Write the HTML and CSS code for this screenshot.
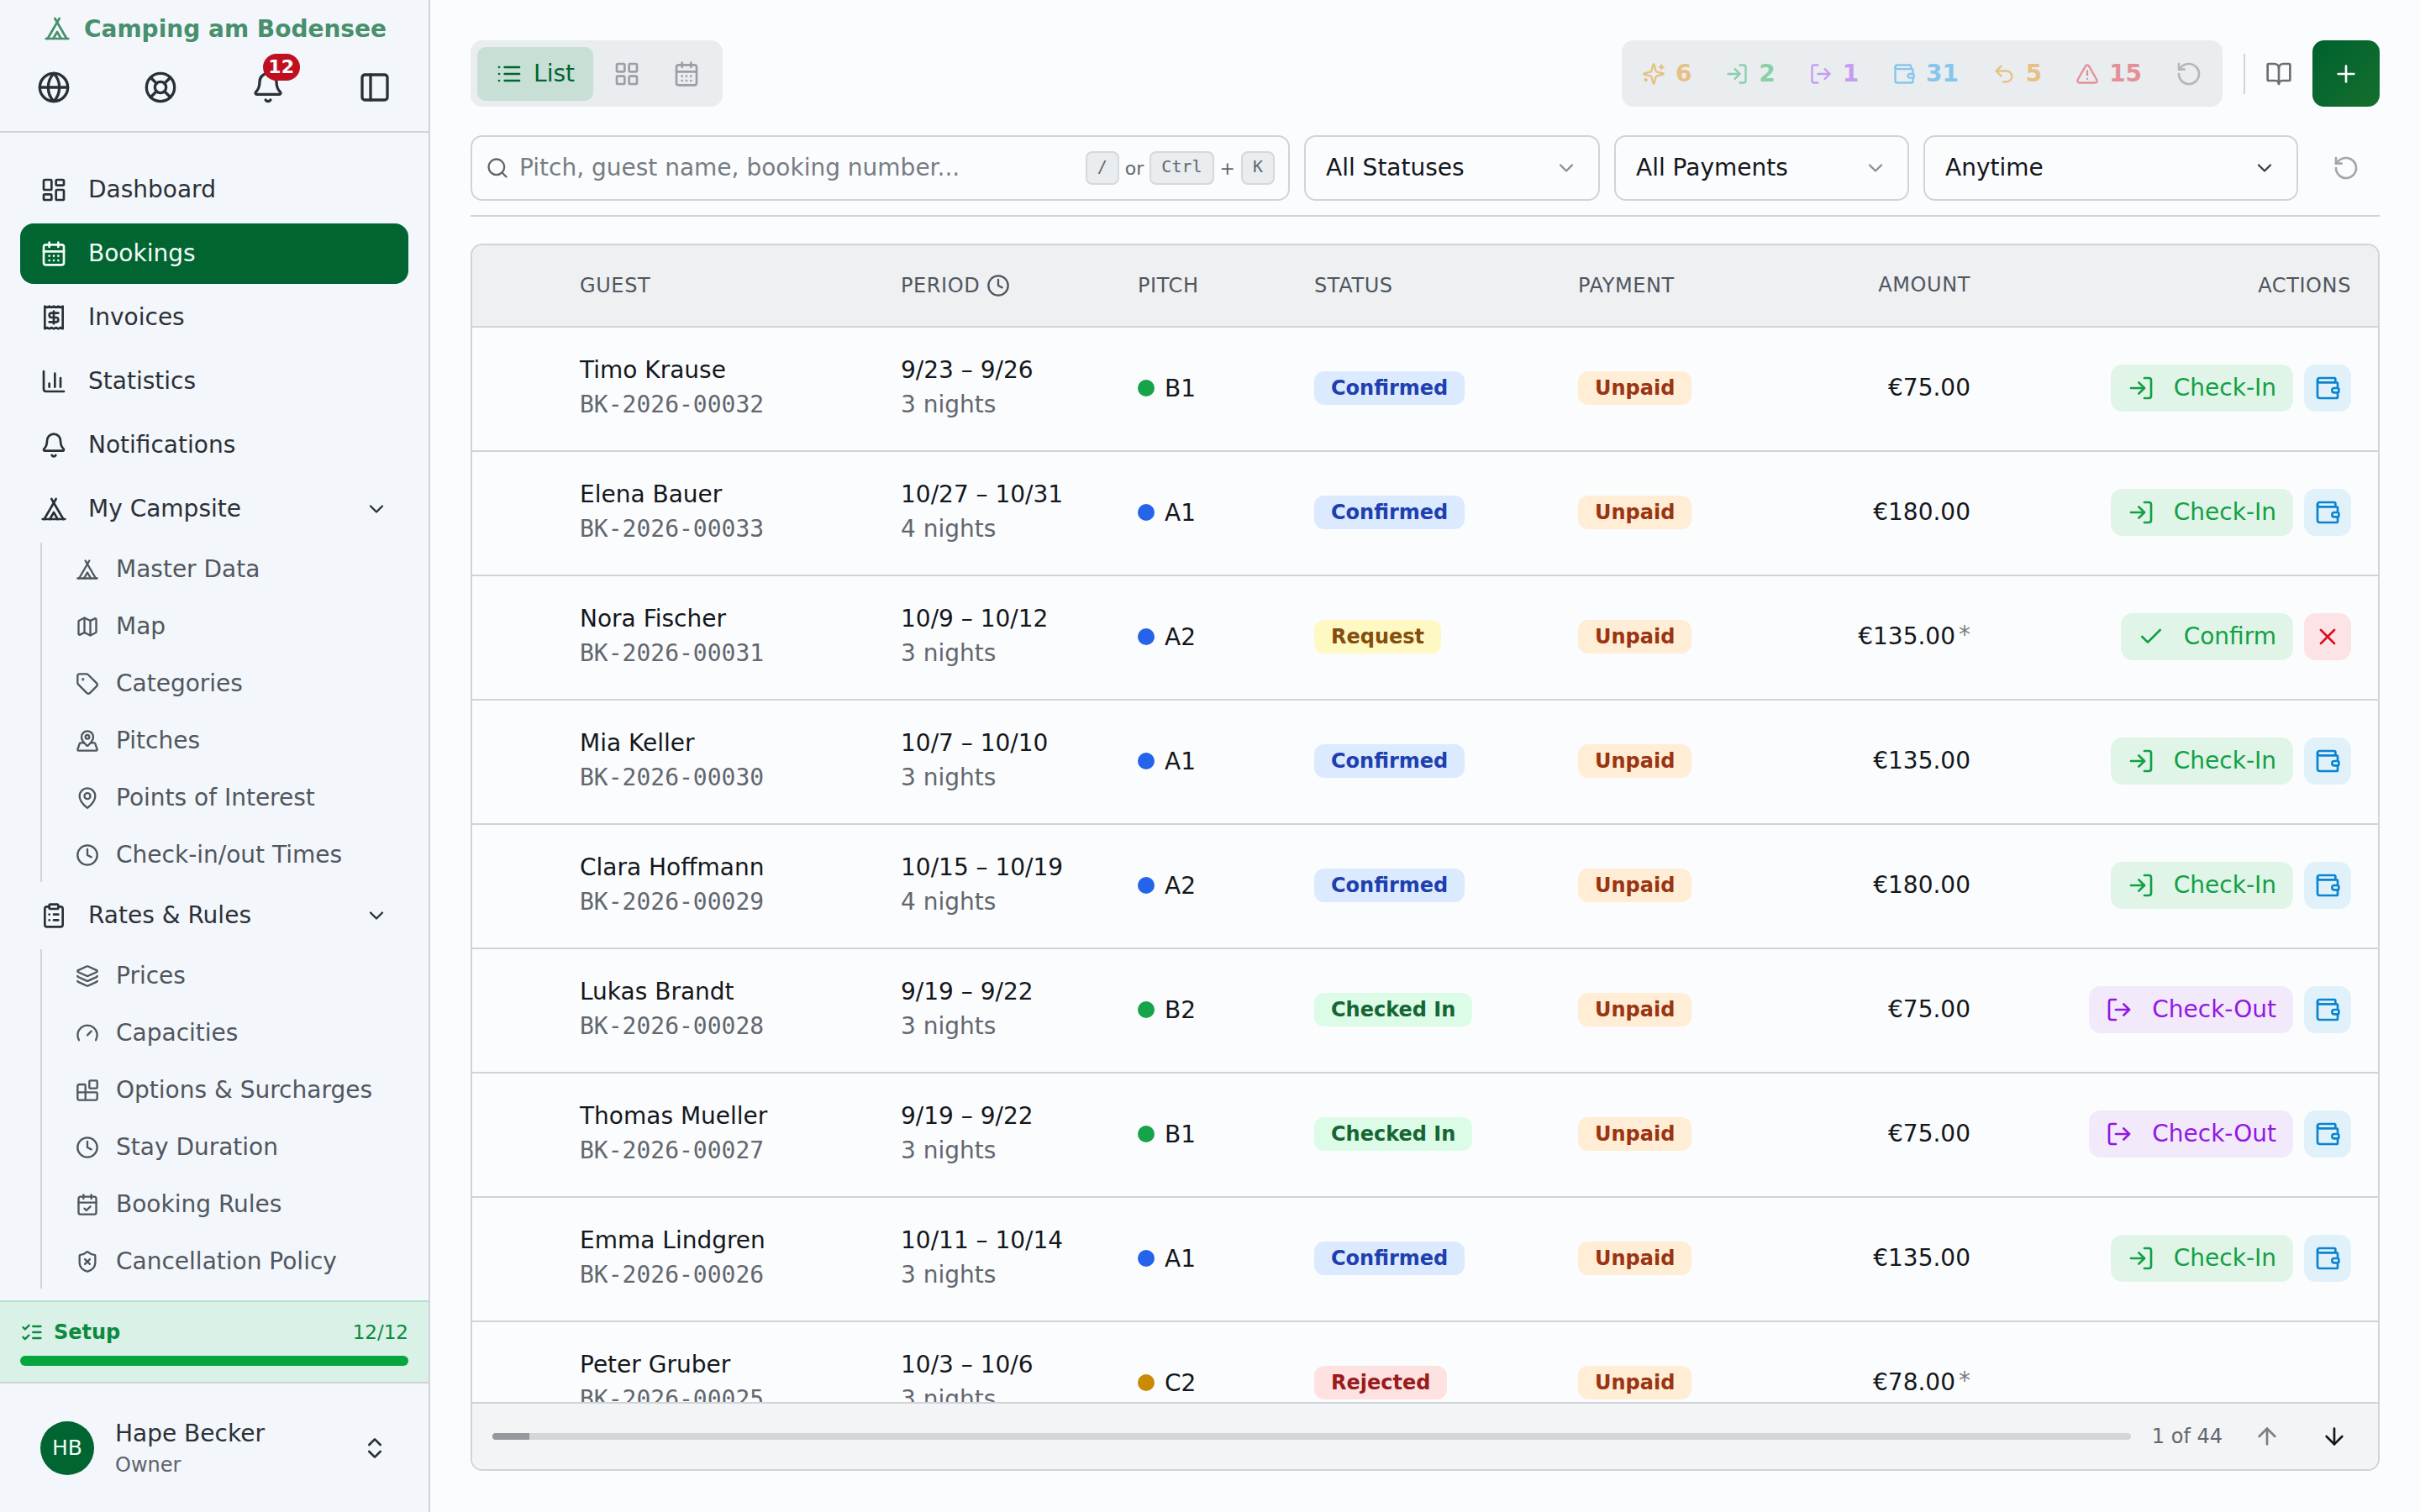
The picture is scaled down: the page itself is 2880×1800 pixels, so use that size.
FILE: index.html
```html
<!DOCTYPE html>
<html lang="en">
<head>
    <meta charset="UTF-8">
    <meta name="viewport" content="width=device-width, initial-scale=1.0">
    <title>Bookings - Camping am Bodensee</title>
    <link rel="stylesheet" href="styles.css">
</head>
<body>
    <svg class="sprite" xmlns="http://www.w3.org/2000/svg">
        <symbol id="i-tent" viewBox="0 0 24 24"><path d="M3.5 21 14 3"/><path d="M20.5 21 10 3"/><path d="M15.5 21 12 15l-3.5 6"/><path d="M2 21h20"/></symbol>
        <symbol id="i-globe" viewBox="0 0 24 24"><circle cx="12" cy="12" r="10"/><path d="M12 2a14.5 14.5 0 0 0 0 20 14.5 14.5 0 0 0 0-20"/><path d="M2 12h20"/></symbol>
        <symbol id="i-buoy" viewBox="0 0 24 24"><circle cx="12" cy="12" r="10"/><path d="m4.93 4.93 4.24 4.24"/><path d="m14.83 9.17 4.24-4.24"/><path d="m14.83 14.83 4.24 4.24"/><path d="m9.17 14.83-4.24 4.24"/><circle cx="12" cy="12" r="4"/></symbol>
        <symbol id="i-bell" viewBox="0 0 24 24"><path d="M10.268 21a2 2 0 0 0 3.464 0"/><path d="M3.262 15.326A1 1 0 0 0 4 17h16a1 1 0 0 0 .74-1.673C19.41 13.956 18 12.499 18 8A6 6 0 0 0 6 8c0 4.499-1.411 5.956-2.738 7.326"/></symbol>
        <symbol id="i-panel" viewBox="0 0 24 24"><rect x="3" y="3" width="18" height="18" rx="2"/><path d="M9 3v18"/></symbol>
        <symbol id="i-dash" viewBox="0 0 24 24"><rect x="3" y="3" width="7" height="9" rx="1"/><rect x="14" y="3" width="7" height="5" rx="1"/><rect x="14" y="12" width="7" height="9" rx="1"/><rect x="3" y="16" width="7" height="5" rx="1"/></symbol>
        <symbol id="i-cal" viewBox="0 0 24 24"><path d="M8 2v4"/><path d="M16 2v4"/><rect x="3" y="4" width="18" height="18" rx="2"/><path d="M3 10h18"/><path d="M8 14h.01"/><path d="M12 14h.01"/><path d="M16 14h.01"/><path d="M8 18h.01"/><path d="M12 18h.01"/><path d="M16 18h.01"/></symbol>
        <symbol id="i-receipt" viewBox="0 0 24 24"><path d="M4 2v20l2-1 2 1 2-1 2 1 2-1 2 1 2-1 2 1V2l-2 1-2-1-2 1-2-1-2 1-2-1-2 1Z"/><path d="M16 8h-6a2 2 0 1 0 0 4h4a2 2 0 1 1 0 4H8"/><path d="M12 17.5v-11"/></symbol>
        <symbol id="i-chart" viewBox="0 0 24 24"><path d="M3 3v16a2 2 0 0 0 2 2h16"/><path d="M8 17v-3"/><path d="M13 17V5"/><path d="M18 17V9"/></symbol>
        <symbol id="i-down" viewBox="0 0 24 24"><path d="m6 9 6 6 6-6"/></symbol>
        <symbol id="i-map" viewBox="0 0 24 24"><path d="M14.106 5.553a2 2 0 0 0 1.788 0l3.659-1.83A1 1 0 0 1 21 4.619v12.764a1 1 0 0 1-.553.894l-4.553 2.277a2 2 0 0 1-1.788 0l-4.212-2.106a2 2 0 0 0-1.788 0l-3.659 1.83A1 1 0 0 1 3 19.381V6.618a1 1 0 0 1 .553-.894l4.553-2.277a2 2 0 0 1 1.788 0z"/><path d="M15 5.764v15"/><path d="M9 3.236v15"/></symbol>
        <symbol id="i-tag" viewBox="0 0 24 24"><path d="M12.586 2.586A2 2 0 0 0 11.172 2H4a2 2 0 0 0-2 2v7.172a2 2 0 0 0 .586 1.414l8.704 8.704a2.426 2.426 0 0 0 3.42 0l6.58-6.58a2.426 2.426 0 0 0 0-3.42z"/><circle cx="7.5" cy="7.5" r=".5"/></symbol>
        <symbol id="i-pinned" viewBox="0 0 24 24"><path d="M18 8c0 3.613-3.869 7.429-5.393 8.795a1 1 0 0 1-1.214 0C9.87 15.429 6 11.613 6 8a6 6 0 0 1 12 0"/><circle cx="12" cy="8" r="2"/><path d="M8.714 14h-3.71a1 1 0 0 0-.948.683l-2.004 6A1 1 0 0 0 3 22h18a1 1 0 0 0 .948-1.316l-2-6a1 1 0 0 0-.949-.684h-3.712"/></symbol>
        <symbol id="i-pin" viewBox="0 0 24 24"><path d="M20 10c0 4.993-5.539 10.193-7.399 11.799a1 1 0 0 1-1.202 0C9.539 20.193 4 14.993 4 10a8 8 0 0 1 16 0"/><circle cx="12" cy="10" r="3"/></symbol>
        <symbol id="i-clock" viewBox="0 0 24 24"><circle cx="12" cy="12" r="10"/><path d="M12 6v6l4 2"/></symbol>
        <symbol id="i-clip" viewBox="0 0 24 24"><rect x="8" y="2" width="8" height="4" rx="1"/><path d="M16 4h2a2 2 0 0 1 2 2v14a2 2 0 0 1-2 2H6a2 2 0 0 1-2-2V6a2 2 0 0 1 2-2h2"/><path d="M12 11h4"/><path d="M12 16h4"/><path d="M8 11h.01"/><path d="M8 16h.01"/></symbol>
        <symbol id="i-layers" viewBox="0 0 24 24"><path d="M12.83 2.18a2 2 0 0 0-1.66 0L2.6 6.08a1 1 0 0 0 0 1.83l8.58 3.91a2 2 0 0 0 1.66 0l8.58-3.9a1 1 0 0 0 0-1.83z"/><path d="M2 12a1 1 0 0 0 .58.91l8.6 3.91a2 2 0 0 0 1.65 0l8.58-3.9A1 1 0 0 0 22 12"/><path d="M2 17a1 1 0 0 0 .58.91l8.6 3.91a2 2 0 0 0 1.65 0l8.58-3.9A1 1 0 0 0 22 17"/></symbol>
        <symbol id="i-gauge" viewBox="0 0 24 24"><path d="m12 14 4-4"/><path d="M3.34 19a10 10 0 1 1 17.32 0"/></symbol>
        <symbol id="i-blocks" viewBox="0 0 24 24"><path d="M10 22V7a1 1 0 0 0-1-1H4a2 2 0 0 0-2 2v12a2 2 0 0 0 2 2h16a2 2 0 0 0 2-2v-5a1 1 0 0 0-1-1H2"/><rect x="14" y="2" width="8" height="8" rx="1"/></symbol>
        <symbol id="i-calcheck" viewBox="0 0 24 24"><path d="M8 2v4"/><path d="M16 2v4"/><rect x="3" y="4" width="18" height="18" rx="2"/><path d="M3 10h18"/><path d="m9 16 2 2 4-4"/></symbol>
        <symbol id="i-shield" viewBox="0 0 24 24"><path d="M20 13c0 5-3.5 7.5-7.66 8.95a1 1 0 0 1-.67-.01C7.5 20.5 4 18 4 13V6a1 1 0 0 1 1-1c2 0 4.5-1.2 6.24-2.72a1.17 1.17 0 0 1 1.52 0C14.51 3.81 17 5 19 5a1 1 0 0 1 1 1z"/><path d="m14.5 9.5-5 5"/><path d="m9.5 9.5 5 5"/></symbol>
        <symbol id="i-checks" viewBox="0 0 24 24"><path d="m3 17 2 2 4-4"/><path d="m3 7 2 2 4-4"/><path d="M13 6h8"/><path d="M13 12h8"/><path d="M13 18h8"/></symbol>
        <symbol id="i-updown" viewBox="0 0 24 24"><path d="m7 15 5 5 5-5"/><path d="m7 9 5-5 5 5"/></symbol>
        <symbol id="i-list" viewBox="0 0 24 24"><path d="M3 12h.01"/><path d="M3 18h.01"/><path d="M3 6h.01"/><path d="M8 12h13"/><path d="M8 18h13"/><path d="M8 6h13"/></symbol>
        <symbol id="i-grid" viewBox="0 0 24 24"><rect x="3" y="3" width="7" height="7" rx="1"/><rect x="14" y="3" width="7" height="7" rx="1"/><rect x="14" y="14" width="7" height="7" rx="1"/><rect x="3" y="14" width="7" height="7" rx="1"/></symbol>
        <symbol id="i-search" viewBox="0 0 24 24"><circle cx="11" cy="11" r="8"/><path d="m21 21-4.3-4.3"/></symbol>
        <symbol id="i-spark" viewBox="0 0 24 24"><path d="M9.937 15.5A2 2 0 0 0 8.5 14.063l-6.135-1.582a.5.5 0 0 1 0-.962L8.5 9.936A2 2 0 0 0 9.937 8.5l1.582-6.135a.5.5 0 0 1 .963 0L14.063 8.5A2 2 0 0 0 15.5 9.937l6.135 1.581a.5.5 0 0 1 0 .964L15.5 14.063a2 2 0 0 0-1.437 1.437l-1.582 6.135a.5.5 0 0 1-.963 0z"/><path d="M20 3v4"/><path d="M22 5h-4"/><path d="M4 17v2"/><path d="M5 18H3"/></symbol>
        <symbol id="i-login" viewBox="0 0 24 24"><path d="M15 3h4a2 2 0 0 1 2 2v14a2 2 0 0 1-2 2h-4"/><path d="m10 17 5-5-5-5"/><path d="M15 12H3"/></symbol>
        <symbol id="i-logout" viewBox="0 0 24 24"><path d="M9 21H5a2 2 0 0 1-2-2V5a2 2 0 0 1 2-2h4"/><path d="m16 17 5-5-5-5"/><path d="M21 12H9"/></symbol>
        <symbol id="i-wallet" viewBox="0 0 24 24"><path d="M19 7V4a1 1 0 0 0-1-1H5a2 2 0 0 0 0 4h15a1 1 0 0 1 1 1v4h-3a2 2 0 0 0 0 4h3a1 1 0 0 0 1-1v-2a1 1 0 0 0-1-1"/><path d="M3 5v14a2 2 0 0 0 2 2h15a1 1 0 0 0 1-1v-4"/></symbol>
        <symbol id="i-undo" viewBox="0 0 24 24"><path d="M9 14 4 9l5-5"/><path d="M4 9h10.5a5.5 5.5 0 0 1 5.5 5.5a5.5 5.5 0 0 1-5.5 5.5H11"/></symbol>
        <symbol id="i-alert" viewBox="0 0 24 24"><path d="m21.73 18-8-14a2 2 0 0 0-3.48 0l-8 14A2 2 0 0 0 4 21h16a2 2 0 0 0 1.73-3"/><path d="M12 9v4"/><path d="M12 17h.01"/></symbol>
        <symbol id="i-reset" viewBox="0 0 24 24"><path d="M3 12a9 9 0 1 0 9-9 9.75 9.75 0 0 0-6.74 2.74L3 8"/><path d="M3 3v5h5"/></symbol>
        <symbol id="i-book" viewBox="0 0 24 24"><path d="M12 7v14"/><path d="M3 18a1 1 0 0 1-1-1V4a1 1 0 0 1 1-1h5a4 4 0 0 1 4 4 4 4 0 0 1 4-4h5a1 1 0 0 1 1 1v13a1 1 0 0 1-1 1h-6a3 3 0 0 0-3 3 3 3 0 0 0-3-3z"/></symbol>
        <symbol id="i-plus" viewBox="0 0 24 24"><path d="M5 12h14"/><path d="M12 5v14"/></symbol>
        <symbol id="i-check" viewBox="0 0 24 24"><path d="M20 6 9 17l-5-5"/></symbol>
        <symbol id="i-x" viewBox="0 0 24 24"><path d="M18 6 6 18"/><path d="m6 6 12 12"/></symbol>
        <symbol id="i-arrowup" viewBox="0 0 24 24"><path d="m5 12 7-7 7 7"/><path d="M12 19V5"/></symbol>
        <symbol id="i-arrowdown" viewBox="0 0 24 24"><path d="M12 5v14"/><path d="m19 12-7 7-7-7"/></symbol>
    </svg>

    <div class="app">
        <aside class="sidebar">
            <div class="side-head">
                <div class="brand">
                    <svg class="ic ic-32"><use href="#i-tent"/></svg>
                    <span>Camping am Bodensee</span>
                </div>
                <div class="side-tools">
                    <svg class="ic ic-40"><use href="#i-globe"/></svg>
                    <svg class="ic ic-40"><use href="#i-buoy"/></svg>
                    <div class="bell">
                        <svg class="ic ic-40"><use href="#i-bell"/></svg>
                        <span class="bell-count">12</span>
                    </div>
                    <svg class="ic ic-40"><use href="#i-panel"/></svg>
                </div>
            </div>

            <nav class="nav">
                <a class="nav-item"><svg class="ic ic-32"><use href="#i-dash"/></svg>Dashboard</a>
                <a class="nav-item active"><svg class="ic ic-32"><use href="#i-cal"/></svg>Bookings</a>
                <a class="nav-item"><svg class="ic ic-32"><use href="#i-receipt"/></svg>Invoices</a>
                <a class="nav-item"><svg class="ic ic-32"><use href="#i-chart"/></svg>Statistics</a>
                <a class="nav-item"><svg class="ic ic-32"><use href="#i-bell"/></svg>Notifications</a>
                <a class="nav-item"><svg class="ic ic-32"><use href="#i-tent"/></svg>My Campsite<svg class="ic ic-28 nav-caret"><use href="#i-down"/></svg></a>
                <div class="subnav">
                    <a class="sub-item"><svg class="ic ic-28"><use href="#i-tent"/></svg>Master Data</a>
                    <a class="sub-item"><svg class="ic ic-28"><use href="#i-map"/></svg>Map</a>
                    <a class="sub-item"><svg class="ic ic-28"><use href="#i-tag"/></svg>Categories</a>
                    <a class="sub-item"><svg class="ic ic-28"><use href="#i-pinned"/></svg>Pitches</a>
                    <a class="sub-item"><svg class="ic ic-28"><use href="#i-pin"/></svg>Points of Interest</a>
                    <a class="sub-item"><svg class="ic ic-28"><use href="#i-clock"/></svg>Check-in/out Times</a>
                </div>
                <a class="nav-item"><svg class="ic ic-32"><use href="#i-clip"/></svg>Rates &amp; Rules<svg class="ic ic-28 nav-caret"><use href="#i-down"/></svg></a>
                <div class="subnav">
                    <a class="sub-item"><svg class="ic ic-28"><use href="#i-layers"/></svg>Prices</a>
                    <a class="sub-item"><svg class="ic ic-28"><use href="#i-gauge"/></svg>Capacities</a>
                    <a class="sub-item"><svg class="ic ic-28"><use href="#i-blocks"/></svg>Options &amp; Surcharges</a>
                    <a class="sub-item"><svg class="ic ic-28"><use href="#i-clock"/></svg>Stay Duration</a>
                    <a class="sub-item"><svg class="ic ic-28"><use href="#i-calcheck"/></svg>Booking Rules</a>
                    <a class="sub-item"><svg class="ic ic-28"><use href="#i-shield"/></svg>Cancellation Policy</a>
                </div>
            </nav>

            <div class="setup">
                <div class="setup-top">
                    <svg class="ic ic-28"><use href="#i-checks"/></svg>
                    <strong>Setup</strong>
                    <span class="setup-count">12/12</span>
                </div>
                <div class="setup-bar"></div>
            </div>

            <div class="user">
                <div class="avatar">HB</div>
                <div class="user-info">
                    <div class="user-name">Hape Becker</div>
                    <div class="user-role">Owner</div>
                </div>
                <svg class="ic ic-32 user-caret"><use href="#i-updown"/></svg>
            </div>
        </aside>

        <main class="main">
            <div class="toolbar">
                <div class="view-switch">
                    <button class="view-btn active"><svg class="ic ic-32"><use href="#i-list"/></svg>List</button>
                    <button class="view-btn"><svg class="ic ic-32"><use href="#i-grid"/></svg></button>
                    <button class="view-btn"><svg class="ic ic-32"><use href="#i-cal"/></svg></button>
                </div>
                <div class="stats">
                    <span class="stat orange"><svg class="ic ic-28"><use href="#i-spark"/></svg>6</span>
                    <span class="stat green"><svg class="ic ic-28"><use href="#i-login"/></svg>2</span>
                    <span class="stat purple"><svg class="ic ic-28"><use href="#i-logout"/></svg>1</span>
                    <span class="stat blue"><svg class="ic ic-28"><use href="#i-wallet"/></svg>31</span>
                    <span class="stat orange"><svg class="ic ic-28"><use href="#i-undo"/></svg>5</span>
                    <span class="stat red"><svg class="ic ic-28"><use href="#i-alert"/></svg>15</span>
                    <svg class="ic ic-32 stat-reset"><use href="#i-reset"/></svg>
                </div>
                <div class="tool-divider"></div>
                <svg class="ic ic-32 tool-book"><use href="#i-book"/></svg>
                <button class="add-btn"><svg class="ic ic-32"><use href="#i-plus"/></svg></button>
            </div>

            <div class="filters">
                <div class="search">
                    <svg class="ic ic-28"><use href="#i-search"/></svg>
                    <span class="search-text">Pitch, guest name, booking number...</span>
                    <kbd>/</kbd><span class="key-sep">or</span><kbd>Ctrl</kbd><span class="key-sep">+</span><kbd>K</kbd>
                </div>
                <div class="select sel-status">All Statuses<svg class="ic ic-28"><use href="#i-down"/></svg></div>
                <div class="select sel-pay">All Payments<svg class="ic ic-28"><use href="#i-down"/></svg></div>
                <div class="select sel-time">Anytime<svg class="ic ic-28"><use href="#i-down"/></svg></div>
                <div class="filter-reset"><svg class="ic ic-32"><use href="#i-reset"/></svg></div>
            </div>

            <section class="table">
                <div class="row head">
                    <div class="guest">GUEST</div>
                    <div class="period-head">PERIOD <svg class="ic ic-28"><use href="#i-clock"/></svg></div>
                    <div>PITCH</div>
                    <div>STATUS</div>
                    <div>PAYMENT</div>
                    <div class="amount">AMOUNT</div>
                    <div class="actions">ACTIONS</div>
                </div>
                <div class="rows">
                    <div class="row">
                        <div class="guest stack"><div class="line">Timo Krause</div><div class="sub mono">BK-2026-00032</div></div>
                        <div class="stack"><div class="line">9/23 – 9/26</div><div class="sub">3 nights</div></div>
                        <div class="pitch"><i class="dot d-green"></i>B1</div>
                        <div><span class="badge b-confirmed">Confirmed</span></div>
                        <div><span class="badge b-unpaid">Unpaid</span></div>
                        <div class="amount">€75.00</div>
                        <div class="actions"><button class="act a-in"><svg class="ic ic-32"><use href="#i-login"/></svg>Check-In</button><button class="act-sq a-pay"><svg class="ic ic-32"><use href="#i-wallet"/></svg></button></div>
                    </div>
                    <div class="row">
                        <div class="guest stack"><div class="line">Elena Bauer</div><div class="sub mono">BK-2026-00033</div></div>
                        <div class="stack"><div class="line">10/27 – 10/31</div><div class="sub">4 nights</div></div>
                        <div class="pitch"><i class="dot d-blue"></i>A1</div>
                        <div><span class="badge b-confirmed">Confirmed</span></div>
                        <div><span class="badge b-unpaid">Unpaid</span></div>
                        <div class="amount">€180.00</div>
                        <div class="actions"><button class="act a-in"><svg class="ic ic-32"><use href="#i-login"/></svg>Check-In</button><button class="act-sq a-pay"><svg class="ic ic-32"><use href="#i-wallet"/></svg></button></div>
                    </div>
                    <div class="row">
                        <div class="guest stack"><div class="line">Nora Fischer</div><div class="sub mono">BK-2026-00031</div></div>
                        <div class="stack"><div class="line">10/9 – 10/12</div><div class="sub">3 nights</div></div>
                        <div class="pitch"><i class="dot d-blue"></i>A2</div>
                        <div><span class="badge b-request">Request</span></div>
                        <div><span class="badge b-unpaid">Unpaid</span></div>
                        <div class="amount">€135.00<span class="star">*</span></div>
                        <div class="actions"><button class="act a-in"><svg class="ic ic-32"><use href="#i-check"/></svg>Confirm</button><button class="act-sq a-no"><svg class="ic ic-32"><use href="#i-x"/></svg></button></div>
                    </div>
                    <div class="row">
                        <div class="guest stack"><div class="line">Mia Keller</div><div class="sub mono">BK-2026-00030</div></div>
                        <div class="stack"><div class="line">10/7 – 10/10</div><div class="sub">3 nights</div></div>
                        <div class="pitch"><i class="dot d-blue"></i>A1</div>
                        <div><span class="badge b-confirmed">Confirmed</span></div>
                        <div><span class="badge b-unpaid">Unpaid</span></div>
                        <div class="amount">€135.00</div>
                        <div class="actions"><button class="act a-in"><svg class="ic ic-32"><use href="#i-login"/></svg>Check-In</button><button class="act-sq a-pay"><svg class="ic ic-32"><use href="#i-wallet"/></svg></button></div>
                    </div>
                    <div class="row">
                        <div class="guest stack"><div class="line">Clara Hoffmann</div><div class="sub mono">BK-2026-00029</div></div>
                        <div class="stack"><div class="line">10/15 – 10/19</div><div class="sub">4 nights</div></div>
                        <div class="pitch"><i class="dot d-blue"></i>A2</div>
                        <div><span class="badge b-confirmed">Confirmed</span></div>
                        <div><span class="badge b-unpaid">Unpaid</span></div>
                        <div class="amount">€180.00</div>
                        <div class="actions"><button class="act a-in"><svg class="ic ic-32"><use href="#i-login"/></svg>Check-In</button><button class="act-sq a-pay"><svg class="ic ic-32"><use href="#i-wallet"/></svg></button></div>
                    </div>
                    <div class="row">
                        <div class="guest stack"><div class="line">Lukas Brandt</div><div class="sub mono">BK-2026-00028</div></div>
                        <div class="stack"><div class="line">9/19 – 9/22</div><div class="sub">3 nights</div></div>
                        <div class="pitch"><i class="dot d-green"></i>B2</div>
                        <div><span class="badge b-checked">Checked In</span></div>
                        <div><span class="badge b-unpaid">Unpaid</span></div>
                        <div class="amount">€75.00</div>
                        <div class="actions"><button class="act a-out"><svg class="ic ic-32"><use href="#i-logout"/></svg>Check-Out</button><button class="act-sq a-pay"><svg class="ic ic-32"><use href="#i-wallet"/></svg></button></div>
                    </div>
                    <div class="row">
                        <div class="guest stack"><div class="line">Thomas Mueller</div><div class="sub mono">BK-2026-00027</div></div>
                        <div class="stack"><div class="line">9/19 – 9/22</div><div class="sub">3 nights</div></div>
                        <div class="pitch"><i class="dot d-green"></i>B1</div>
                        <div><span class="badge b-checked">Checked In</span></div>
                        <div><span class="badge b-unpaid">Unpaid</span></div>
                        <div class="amount">€75.00</div>
                        <div class="actions"><button class="act a-out"><svg class="ic ic-32"><use href="#i-logout"/></svg>Check-Out</button><button class="act-sq a-pay"><svg class="ic ic-32"><use href="#i-wallet"/></svg></button></div>
                    </div>
                    <div class="row">
                        <div class="guest stack"><div class="line">Emma Lindgren</div><div class="sub mono">BK-2026-00026</div></div>
                        <div class="stack"><div class="line">10/11 – 10/14</div><div class="sub">3 nights</div></div>
                        <div class="pitch"><i class="dot d-blue"></i>A1</div>
                        <div><span class="badge b-confirmed">Confirmed</span></div>
                        <div><span class="badge b-unpaid">Unpaid</span></div>
                        <div class="amount">€135.00</div>
                        <div class="actions"><button class="act a-in"><svg class="ic ic-32"><use href="#i-login"/></svg>Check-In</button><button class="act-sq a-pay"><svg class="ic ic-32"><use href="#i-wallet"/></svg></button></div>
                    </div>
                    <div class="row">
                        <div class="guest stack"><div class="line">Peter Gruber</div><div class="sub mono">BK-2026-00025</div></div>
                        <div class="stack"><div class="line">10/3 – 10/6</div><div class="sub">3 nights</div></div>
                        <div class="pitch"><i class="dot d-amber"></i>C2</div>
                        <div><span class="badge b-rejected">Rejected</span></div>
                        <div><span class="badge b-unpaid">Unpaid</span></div>
                        <div class="amount">€78.00<span class="star">*</span></div>
                        <div class="actions"></div>
                    </div>
                </div>
                <div class="table-foot">
                    <div class="scroll-track"><div class="scroll-thumb"></div></div>
                    <span class="page-count">1 of 44</span>
                    <svg class="ic ic-32 page-up"><use href="#i-arrowup"/></svg>
                    <svg class="ic ic-32 page-down"><use href="#i-arrowdown"/></svg>
                </div>
            </section>
        </main>
    </div>
</body>
</html>
```

FILE: styles.css
```css
* {
    box-sizing: border-box;
}

html, body {
    margin: 0;
    height: 100%;
}

body {
    font-family: "DejaVu Sans", sans-serif;
    font-size: 28px;
    color: #14171b;
    background-color: #fbfcfe;
    overflow: hidden;
}

button {
    font: inherit;
    border: 0;
    padding: 0;
    background: none;
    color: inherit;
}

.sprite {
    display: none;
}

.ic {
    flex: none;
    display: block;
    fill: none;
    stroke: currentColor;
    stroke-width: 2;
    stroke-linecap: round;
    stroke-linejoin: round;
}

.ic-28 { width: 28px; height: 28px; }
.ic-32 { width: 32px; height: 32px; }
.ic-40 { width: 40px; height: 40px; }

.app {
    display: flex;
    height: 1800px;
}

/* sidebar */
.sidebar {
    width: 512px;
    flex: none;
    display: flex;
    flex-direction: column;
    background-color: #f3f6fa;
    border-right: 2px solid #d0d4d9;
    color: #2b3038;
}

.side-head {
    height: 158px;
    flex: none;
    border-bottom: 2px solid #d0d4d9;
}

.brand {
    height: 66px;
    padding: 2px 0 0 52px;
    display: flex;
    align-items: center;
    gap: 16px;
    color: #478f6d;
    font-size: 28px;
    font-weight: 700;
}

.side-tools {
    display: flex;
    justify-content: space-between;
    align-items: center;
    padding: 0 44px;
    height: 76px;
}

.bell {
    position: relative;
}

.bell-count {
    position: absolute;
    top: -20px;
    left: 14px;
    width: 44px;
    height: 32px;
    border-radius: 16px;
    background-color: #c0101f;
    color: #fff;
    font-size: 22px;
    font-weight: 700;
    line-height: 32px;
    text-align: center;
}

.nav {
    flex: 1;
    min-height: 0;
    padding: 32px 24px 0;
    display: flex;
    flex-direction: column;
    gap: 4px;
    overflow: hidden;
}

.nav-item {
    height: 72px;
    flex: none;
    display: flex;
    align-items: center;
    gap: 25px;
    padding: 0 24px 2px;
    border-radius: 16px;
    font-size: 28px;
}

.nav-item .ic {
    margin-top: 2px;
}

.nav-item.active {
    background-color: #006531;
    color: #f4fbf7;
}

.nav-caret {
    margin-left: auto;
}

.subnav {
    flex: none;
    margin-left: 24px;
    padding-left: 40px;
    border-left: 2px solid #d0d4d9;
    display: flex;
    flex-direction: column;
    gap: 4px;
}

.sub-item {
    height: 64px;
    display: flex;
    align-items: center;
    gap: 20px;
    padding-bottom: 2px;
    font-size: 28px;
    color: #50565f;
}

.sub-item .ic {
    margin-top: 2px;
}

.setup {
    height: 99px;
    flex: none;
    padding: 0 24px;
    background-color: #d9f1e6;
    border-top: 2px solid #b5e2cc;
    border-bottom: 2px solid #d0d4d9;
    color: #0c8a3f;
}

.setup-top {
    height: 64px;
    padding-top: 8px;
    display: flex;
    align-items: center;
    gap: 12px;
    font-size: 24px;
}

.setup-count {
    margin-left: auto;
    font-size: 23px;
}

.setup-bar {
    height: 12px;
    border-radius: 6px;
    background-color: #05a53f;
}

.user {
    height: 153px;
    flex: none;
    display: flex;
    align-items: center;
    padding: 0 48px;
    gap: 25px;
}

.avatar {
    width: 64px;
    height: 64px;
    flex: none;
    border-radius: 50%;
    background-color: #006531;
    color: #f2fbf6;
    font-size: 25px;
    line-height: 64px;
    text-align: center;
}

.user-info {
    padding-top: 2px;
}

.user-name {
    font-size: 28px;
    line-height: 38px;
}

.user-role {
    font-size: 24px;
    line-height: 36px;
    color: #5d636b;
}

.user-caret {
    margin-left: auto;
}

/* main */
.main {
    flex: 1;
    min-width: 0;
    padding: 48px 48px 49px;
    display: flex;
    flex-direction: column;
}

.toolbar {
    height: 79px;
    flex: none;
    display: flex;
    align-items: center;
}

.view-switch {
    display: flex;
    align-items: center;
    height: 79px;
    width: 300px;
    padding: 0 8px;
    border-radius: 14px;
    background-color: #e9edf0;
}

.view-btn {
    display: flex;
    align-items: center;
    justify-content: center;
    width: 72px;
    height: 64px;
    border-radius: 10px;
    color: #9b9fa4;
}

.view-btn.active {
    width: 141px;
    gap: 13px;
    background-color: #c8dfd5;
    color: #006531;
    font-size: 28px;
}

.view-btn.active + .view-btn {
    margin-left: 5px;
}

.stats {
    margin-left: auto;
    width: 715px;
    height: 79px;
    padding: 0 24px;
    display: flex;
    align-items: center;
    justify-content: space-between;
    border-radius: 14px;
    background-color: #e9edf0;
}

.stat {
    display: flex;
    align-items: center;
    gap: 12px;
    font-size: 28px;
    font-weight: 700;
    opacity: 0.45;
}

.orange { color: #e58a00; }
.green { color: #10b050; }
.purple { color: #9b3cf0; }
.blue { color: #1098e8; }
.red { color: #e0202c; }

.stat-reset {
    color: #b3b7ba;
}

.tool-divider {
    width: 2px;
    height: 48px;
    margin-left: 25px;
    background-color: #d0d4d9;
}

.tool-book {
    margin-left: 24px;
    color: #6a6f75;
}

.add-btn {
    width: 80px;
    height: 79px;
    margin-left: 24px;
    display: flex;
    align-items: center;
    justify-content: center;
    border-radius: 14px;
    background: linear-gradient(135deg, #00612f, #156f2d);
    color: #fff;
}

.filters {
    flex: none;
    display: flex;
    gap: 17px;
    margin-top: 34px;
    padding-bottom: 17px;
    border-bottom: 2px solid #d0d4d9;
}

.search {
    flex: 1;
    height: 78px;
    display: flex;
    align-items: center;
    padding: 0 16px;
    border: 2px solid #d0d4d9;
    border-radius: 14px;
    color: #5f656c;
}

.search-text {
    flex: 1;
    margin-left: 12px;
    padding-bottom: 2px;
    font-size: 28px;
    color: #777c83;
}

kbd {
    height: 40px;
    padding: 0 12px;
    border: 2px solid #d5d8dc;
    border-radius: 8px;
    background-color: #e9edf0;
    font-family: "DejaVu Sans Mono", monospace;
    font-size: 20px;
    line-height: 32px;
    color: #60666d;
}

.key-sep {
    margin: 0 7px;
    font-size: 22px;
    color: #60666d;
}

.select {
    height: 78px;
    display: flex;
    align-items: center;
    justify-content: space-between;
    padding: 0 24px 2px 24px;
    border: 2px solid #d0d4d9;
    border-radius: 14px;
    font-size: 28px;
}

.select .ic {
    color: #8a8f95;
    margin-top: 2px;
}

.sel-status { width: 352px; }
.sel-pay { width: 351px; }
.sel-time { width: 446px; }
.sel-time .ic { color: #3a3f45; }

.filter-reset {
    width: 80px;
    display: flex;
    align-items: center;
    justify-content: center;
    color: #a3a7ab;
}

/* table */
.table {
    flex: 1;
    min-height: 0;
    margin-top: 32px;
    display: flex;
    flex-direction: column;
    border: 2px solid #d0d4d9;
    border-radius: 14px;
    overflow: hidden;
}

.row {
    height: 148px;
    flex: none;
    display: grid;
    grid-template-columns: 510px 282px 210px 314px 222px 245px 1fr;
    align-items: center;
    padding-right: 32px;
    padding-bottom: 2px;
    border-bottom: 2px solid #d0d4d9;
    font-size: 28px;
}

.row.head {
    height: 98px;
    padding-bottom: 0;
    background-color: #eef0f2;
    font-size: 24px;
    letter-spacing: 0.6px;
    color: #50565f;
}

.guest {
    padding-left: 128px;
}

.stack {
    padding-bottom: 2px;
}

.period-head {
    display: flex;
    align-items: center;
    gap: 8px;
}

.rows {
    flex: 1;
    min-height: 0;
    overflow: hidden;
}

.line {
    line-height: 40px;
}

.sub {
    margin-top: 1px;
    font-size: 28px;
    line-height: 40px;
    color: #62676e;
}

.mono {
    font-family: "DejaVu Sans Mono", monospace;
}

.pitch {
    display: flex;
    align-items: center;
    gap: 12px;
}

.dot {
    width: 20px;
    height: 20px;
    border-radius: 50%;
}

.d-green { background-color: #16a34a; }
.d-blue { background-color: #2563eb; }
.d-amber { background-color: #ca8a04; }

.badge {
    display: inline-block;
    height: 40px;
    padding: 0 20px;
    border-radius: 12px;
    font-size: 24px;
    font-weight: 700;
    line-height: 40px;
    vertical-align: middle;
}

.b-confirmed { background-color: #dbeafe; color: #1e40af; }
.b-request { background-color: #fef9c3; color: #854d0e; }
.b-checked { background-color: #dcfce7; color: #166534; }
.b-unpaid { background-color: #ffedd5; color: #9a3412; }
.b-rejected { background-color: #fee2e2; color: #991b1b; }

.amount {
    position: relative;
    padding-bottom: 2px;
    text-align: right;
}

.amount:has(.star) {
    padding-right: 18px;
}

.star {
    position: absolute;
    right: 0;
    top: -2px;
    font-size: 28px;
    color: #777c83;
}

.actions {
    display: flex;
    justify-content: flex-end;
    align-items: center;
    gap: 13px;
}

.act {
    height: 56px;
    display: flex;
    align-items: center;
    gap: 23px;
    padding: 0 20px 2px;
    border-radius: 14px;
    font-size: 28px;
    white-space: nowrap;
}

.act .ic {
    margin-top: 2px;
}

.act-sq {
    width: 56px;
    height: 56px;
    display: flex;
    align-items: center;
    justify-content: center;
    border-radius: 14px;
}

.a-in { background-color: #e0f5e7; color: #12a045; }
.a-out { background-color: #f2e9fb; color: #9318e2; }
.a-pay { background-color: #e0f1fa; color: #0a84d0; }
.a-no { background-color: #fbe3e6; color: #dc0f22; }

.table-foot {
    height: 80px;
    flex: none;
    display: flex;
    align-items: center;
    padding: 0 36px 0 24px;
    background-color: #f2f4f6;
    border-top: 2px solid #d0d4d9;
}

.scroll-track {
    flex: 1;
    height: 8px;
    border-radius: 4px;
    background-color: #d2d6d9;
    overflow: hidden;
}

.scroll-thumb {
    width: 44px;
    height: 8px;
    background-color: #94989c;
}

.page-count {
    flex: none;
    margin-left: 25px;
    font-size: 24px;
    white-space: nowrap;
    color: #62676e;
}

.page-up {
    margin-left: 37px;
    color: #7a7f85;
}

.page-down {
    margin-left: 48px;
    color: #14171b;
}
```
